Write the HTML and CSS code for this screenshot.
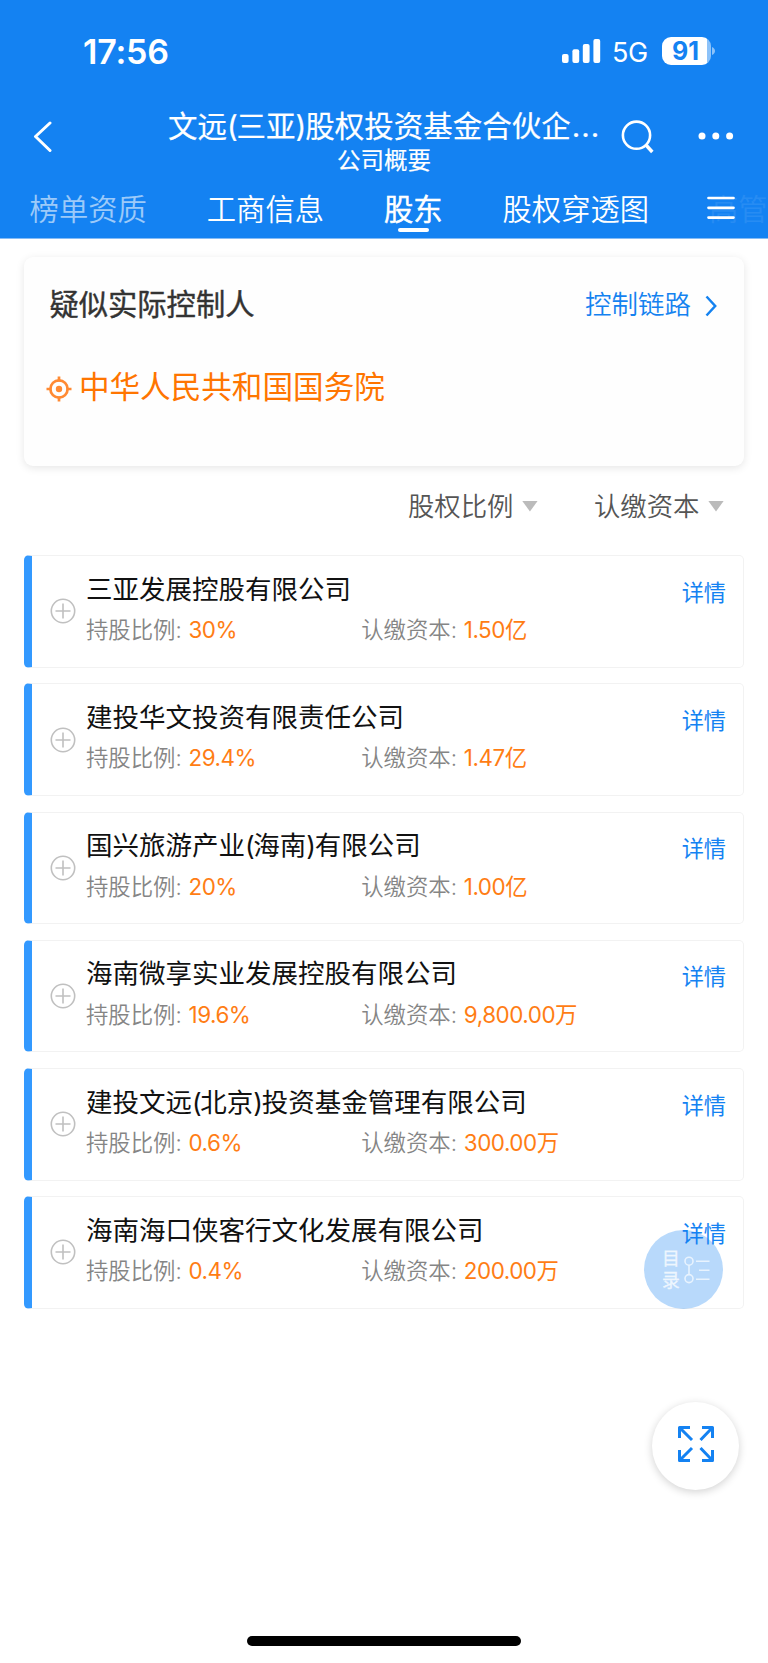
FILE: index.html
```html
<!DOCTYPE html>
<html lang="zh-CN">
<head>
<meta charset="utf-8">
<title>公司概要</title>
<link rel="stylesheet" href="styles.css">
</head>
<body>
<div class="screen">
  <header class="header">
    <div class="status">
      <span class="time">17:56</span>
      <svg class="signal" width="39" height="26" viewBox="0 0 39 26" fill="#fff"><rect x="0" y="15" width="6.6" height="9" rx="2"/><rect x="10.4" y="10.3" width="6.8" height="13.7" rx="2"/><rect x="20.8" y="5" width="6.8" height="19" rx="2"/><rect x="31.4" y="0" width="6.8" height="24" rx="2"/></svg>
      <span class="net">5G</span>
      <span class="battery">91</span>
      <svg class="nub" width="4" height="10" viewBox="0 0 4 10"><path d="M0 1c4 1.500 4 6.500 0 8z" fill="#8cc2f9"/></svg>
    </div>
    <div class="nav">
      <svg class="back" width="20" height="32" viewBox="0 0 20 32" fill="none" stroke="#fff" stroke-width="3" stroke-linecap="round" stroke-linejoin="round"><path d="M18 2 3.500 15.500 18 29.500"/></svg>
      <div class="titles">
        <div class="title">文远<span class="paren">(</span>三亚<span class="paren">)</span>股权投资基金合伙企<span class="dots">...</span></div>
        <div class="subtitle">公司概要</div>
      </div>
      <svg class="search" width="34" height="34" viewBox="0 0 34 34" fill="none" stroke="#fff" stroke-width="2.600"><circle cx="15.500" cy="15.200" r="13.600"/><path d="m25 25 6.300 7" stroke-width="3.400"/></svg>
      <svg class="more" width="36" height="8" viewBox="0 0 36 8" fill="#fff"><circle cx="4" cy="4" r="3.500"/><circle cx="17.800" cy="4" r="3.500"/><circle cx="31.600" cy="4" r="3.500"/></svg>
    </div>
    <nav class="tabs">
      <span class="tab dim">榜单资质</span><span class="tab">工商信息</span><span class="tab active">股东</span><span class="tab">股权穿透图</span><span class="tab ghost">高管</span>
      <svg class="menu" width="28" height="24" viewBox="0 0 28 24" stroke="#fff" stroke-width="2.700" stroke-linecap="round"><path d="M1.500 2h25M1.500 11.800h25M1.500 21.600h25"/></svg>
    </nav>
  </header>

  <section class="controller">
    <div class="controller-head">
      <h2>疑似实际控制人</h2>
      <a class="chain">控制链路<svg width="13" height="22" viewBox="0 0 13 22" fill="none" stroke="#1482f0" stroke-width="2.500"><path d="m1.500 1.500 8.700 9.500-8.700 9.500"/></svg></a>
    </div>
    <div class="owner">
      <svg width="26" height="26" viewBox="0 0 26 26" fill="none" stroke="#ff8a33" stroke-width="2.700"><circle cx="13" cy="13" r="8.600"/><path d="M13 .5v5M13 20.500v5M.5 13h5M20.500 13h5"/><circle cx="13" cy="13" r="3.200" fill="#ff8a33" stroke="none"/></svg>
      <span>中华人民共和国国务院</span>
    </div>
  </section>

  <div class="sorts">
    <span>股权比例<i class="caret"></i></span>
    <span>认缴资本<i class="caret"></i></span>
  </div>

  <main class="list">
    <article class="row"><svg class="plus" viewBox="0 0 26 26"><circle cx="13" cy="13" r="11.700"/><path d="M13 5.500v15M5.500 13h15"/></svg><div class="info"><h3>三亚发展控股有限公司</h3><div class="facts"><span>持股比例: <b>30%</b></span><span>认缴资本: <b>1.50亿</b></span></div></div><a class="detail">详情</a></article>
    <article class="row"><svg class="plus" viewBox="0 0 26 26"><circle cx="13" cy="13" r="11.700"/><path d="M13 5.500v15M5.500 13h15"/></svg><div class="info"><h3>建投华文投资有限责任公司</h3><div class="facts"><span>持股比例: <b>29.4%</b></span><span>认缴资本: <b>1.47亿</b></span></div></div><a class="detail">详情</a></article>
    <article class="row"><svg class="plus" viewBox="0 0 26 26"><circle cx="13" cy="13" r="11.700"/><path d="M13 5.500v15M5.500 13h15"/></svg><div class="info"><h3>国兴旅游产业<span class="paren">(</span>海南<span class="paren">)</span>有限公司</h3><div class="facts"><span>持股比例: <b>20%</b></span><span>认缴资本: <b>1.00亿</b></span></div></div><a class="detail">详情</a></article>
    <article class="row"><svg class="plus" viewBox="0 0 26 26"><circle cx="13" cy="13" r="11.700"/><path d="M13 5.500v15M5.500 13h15"/></svg><div class="info"><h3>海南微享实业发展控股有限公司</h3><div class="facts"><span>持股比例: <b>19.6%</b></span><span>认缴资本: <b>9,800.00万</b></span></div></div><a class="detail">详情</a></article>
    <article class="row"><svg class="plus" viewBox="0 0 26 26"><circle cx="13" cy="13" r="11.700"/><path d="M13 5.500v15M5.500 13h15"/></svg><div class="info"><h3>建投文远<span class="paren">(</span>北京<span class="paren">)</span>投资基金管理有限公司</h3><div class="facts"><span>持股比例: <b>0.6%</b></span><span>认缴资本: <b>300.00万</b></span></div></div><a class="detail">详情</a></article>
    <article class="row"><svg class="plus" viewBox="0 0 26 26"><circle cx="13" cy="13" r="11.700"/><path d="M13 5.500v15M5.500 13h15"/></svg><div class="info"><h3>海南海口侠客行文化发展有限公司</h3><div class="facts"><span>持股比例: <b>0.4%</b></span><span>认缴资本: <b>200.00万</b></span></div></div><a class="detail">详情</a></article>
  </main>

  <div class="catalog">
    <span>目<br>录</span>
    <svg width="26" height="28" viewBox="0 0 26 28" fill="none" stroke="#e8f3fe" stroke-width="1.600"><circle cx="5" cy="5.200" r="4"/><circle cx="5" cy="22.600" r="4"/><path d="M5 9.200v9.400M12 5.200h13.500M15 14.200h10.500M12 23.300h13.500"/></svg>
  </div>
  <div class="expand">
    <svg width="38" height="38" viewBox="0 0 38 38" fill="none" stroke="#1482f2" stroke-width="3" stroke-linejoin="round"><path d="M2.500 13V2.500H13M3 3l12 12M25 2.500h10.500V13M35 3 23.500 15M2.500 25v10.500H13M3 35l12-12M25 35.500h10.500V25M35 35 23.500 23"/></svg>
  </div>
  <div class="home"></div>
</div>
</body>
</html>
```
FILE: styles.css
```css
* { box-sizing: border-box; }
body {
  margin: 0;
  background: #fff;
  font-family: Inter, "Noto Sans CJK SC", sans-serif;
}
h2, h3 { margin: 0; font-weight: 400; }
svg { display: block; flex: none; }
.screen {
  position: relative;
  width: 768px;
  height: 1663px;
  overflow: hidden;
  white-space: nowrap;
  background: #fff;
}
.paren { letter-spacing: -1.2px; }

.header { height: 239px; background: #1482f2; border-bottom: 1px solid #85bcf6; color: #fff; }
.status { display: flex; align-items: center; height: 102px; padding-left: 83px; }
.time { width: 478.500px; font-size: 34px; line-height: 40px; font-weight: 600; letter-spacing: -0.2px; margin-top: 1px; }
.signal { margin-top: 2px; }
.net { width: 50px; margin-left: 11.500px; margin-top: 3px; font-size: 27px; line-height: 32px; letter-spacing: -0.3px; }
.battery {
  width: 49px; height: 28px; border-radius: 9px;
  background: linear-gradient(90deg, #fff 45px, #8cc2f9 45px);
  color: #1482f2; font-size: 25px; line-height: 29px; font-weight: 700;
  text-align: center; padding-right: 2px;
}
.nub { margin-left: 1px; }

.nav { display: flex; align-items: flex-start; height: 80px; padding-left: 32px; }
.back { margin-top: 18.500px; }
.titles { width: 450px; margin-left: 116px; }
.title { font-size: 29.500px; line-height: 40px; height: 40px; margin-top: 3.500px; -webkit-text-stroke: 0.2px #fff; }
.dots { letter-spacing: 1px; margin-left: 1px; }
.subtitle { padding-left: 169px; font-size: 23.500px; line-height: 30px; -webkit-text-stroke: 0.2px #fff; }
.search { margin-left: 3px; margin-top: 18px; }
.more { margin-left: 42.500px; margin-top: 29.500px; }

.tabs { position: relative; display: flex; gap: 60px; height: 56px; padding-left: 29.600px; overflow: hidden; }
.tab { flex: none; font-size: 29.300px; line-height: 56px; font-weight: 350; }
.dim { opacity: 0.58; }
.ghost { opacity: 0.08; }
.active { position: relative; -webkit-text-stroke: 0.6px #fff; }
.active::after {
  content: ""; position: absolute; left: 14px; top: 45.500px;
  width: 31px; height: 4px; border-radius: 2px; background: #fff;
}
.menu { position: absolute; left: 707px; top: 14px; }

.controller {
  margin: 18px 24px 0 24.400px; height: 209px; padding: 25px 26px 0 25px;
  border-radius: 9px; background: #fefefe; box-shadow: 0 2px 9px rgba(0, 0, 0, 0.1);
}
.controller-head { display: flex; justify-content: space-between; align-items: flex-start; height: 46px; }
.controller-head h2 { font-size: 29.300px; color: #333; line-height: 46px; -webkit-text-stroke: 0.4px #333; }
.chain { display: flex; align-items: center; gap: 14px; font-size: 26.500px; font-weight: 350; color: #1482f0; line-height: 44px; }
.chain svg { margin-top: 3px; }
.owner { display: flex; align-items: center; gap: 7px; margin: 33.500px 0 0 -3.500px; height: 46px; font-size: 30.600px; color: #ff7500; }
.owner svg { margin-top: 8px; }

.sorts { display: flex; justify-content: flex-end; gap: 56px; margin-top: 20px; padding-right: 44px; font-size: 26.400px; font-weight: 350; line-height: 40px; color: #555; }
.sorts span { display: flex; align-items: center; }
.caret { width: 16px; height: 11px; margin-left: 8.500px; background: #bbb; clip-path: polygon(0 0, 100% 0, 50% 100%); }

.list { display: grid; grid-auto-rows: 112.700px; row-gap: 15.500px; margin: 29.200px 24px 0 24.400px; }
.row {
  display: flex; align-items: flex-start; padding-left: 18px; padding-right: 17px;
  border: 1.500px solid #f2f2f2; border-left: 8px solid #3399ff; border-radius: 5px;
}
.plus { width: 26px; height: 26px; margin-top: 42.200px; fill: none; stroke: #c0c0c0; stroke-width: 1.600; }
.info { width: 590px; padding-left: 9.500px; }
.info h3 { margin-top: 12.600px; font-size: 26.500px; line-height: 40px; color: #111; }
.facts { display: flex; font-size: 22.400px; font-weight: 350; line-height: 34px; color: #858585; margin-top: 4.500px; }
.facts span { width: 275.300px; }
.facts b { font-weight: 400; color: #ff7d14; letter-spacing: -0.450px; margin-left: 0.400px; }
.detail { font-size: 22.200px; line-height: 34px; color: #1482f2; margin: 19.600px 0 0 auto; }

.catalog {
  position: absolute; left: 644px; top: 1230px; width: 79px; height: 79px; border-radius: 50%;
  display: flex; align-items: center; padding-left: 18px; gap: 4px;
  background: rgba(20, 130, 242, 0.3); color: #eef6fe; font-size: 17.800px; line-height: 22px;
  -webkit-text-stroke: 0.3px #eef6fe;
}
.expand {
  position: absolute; left: 652px; top: 1402px; width: 87px; height: 88px; border-radius: 50%;
  display: flex; align-items: center; justify-content: center; padding-bottom: 4px;
  background: #fff; box-shadow: 0 2px 8px rgba(0, 0, 0, 0.18);
}
.home { position: absolute; left: 247px; top: 1636px; width: 274px; height: 10px; border-radius: 5px; background: #000; }
```
